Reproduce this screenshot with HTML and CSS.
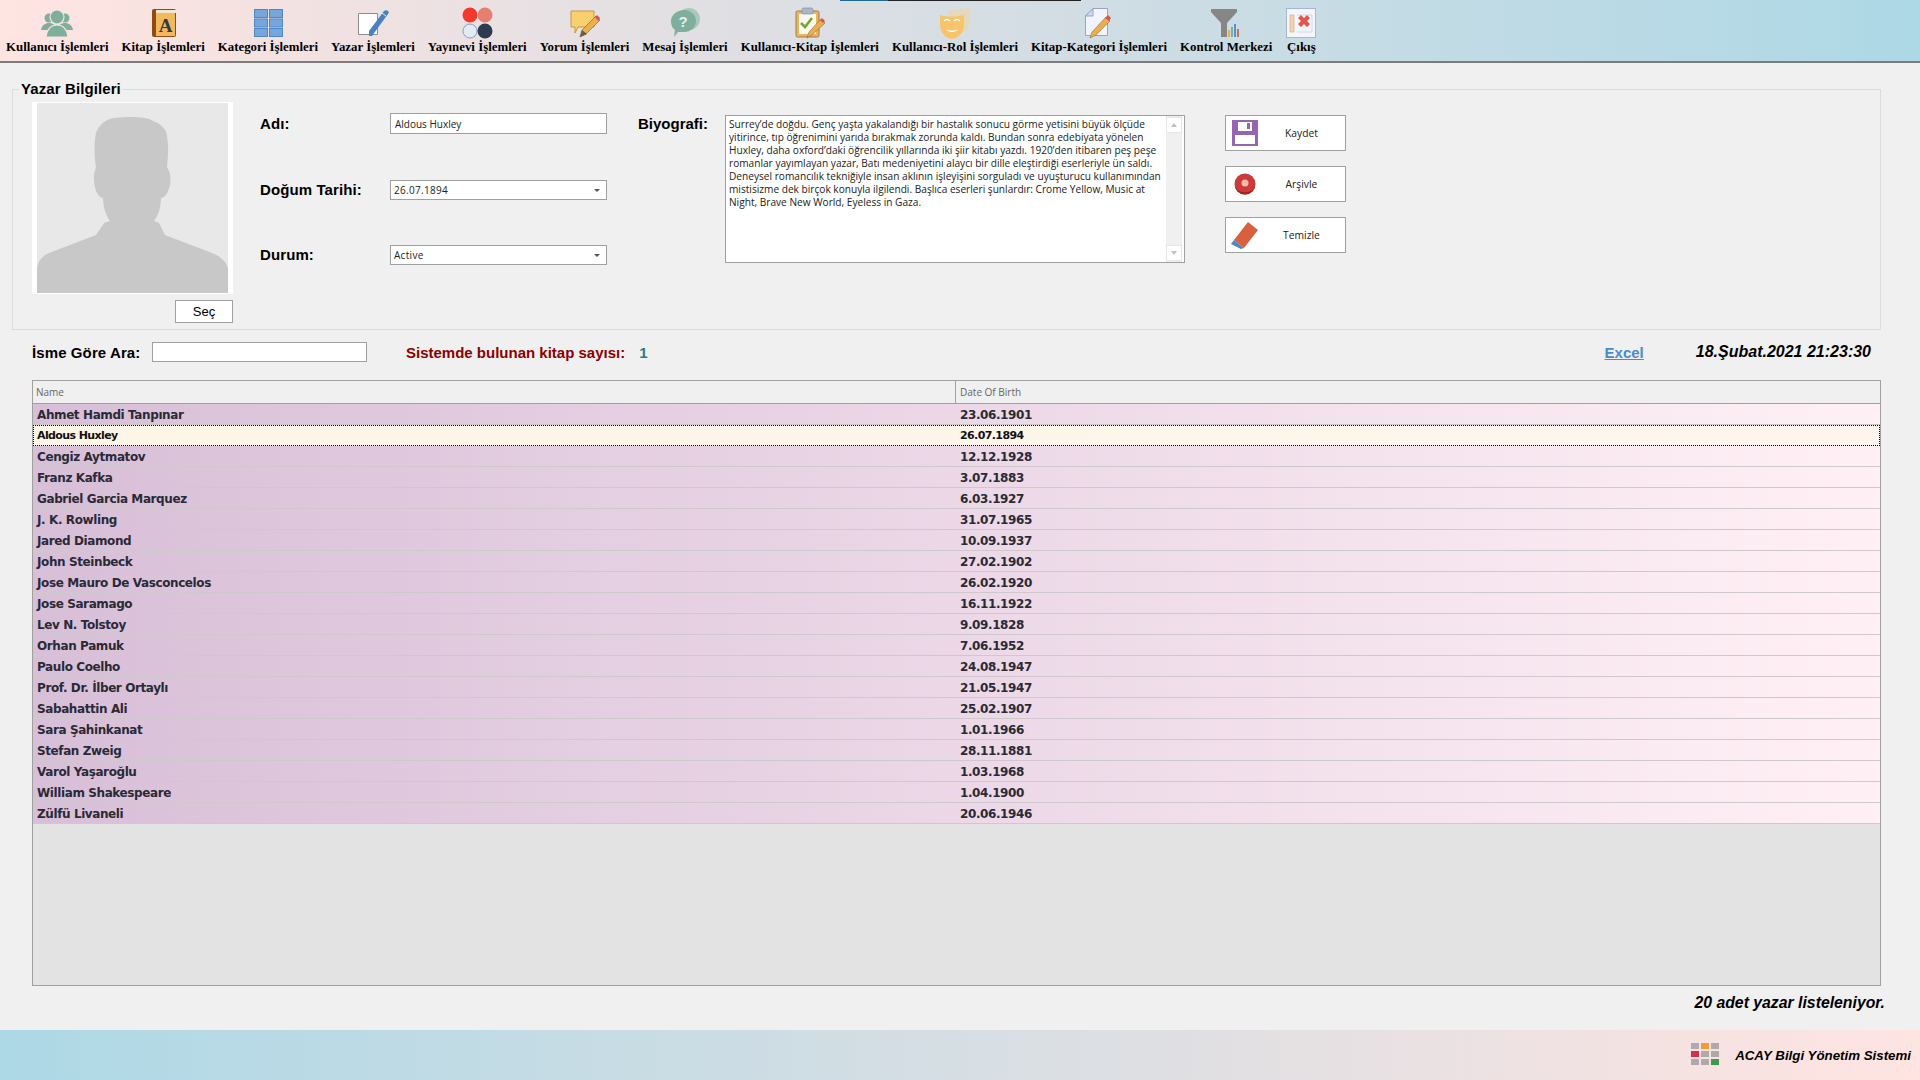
FILE: index.html
```html
<!DOCTYPE html>
<html lang="tr">
<head>
    <meta charset="utf-8">
    <title>Yazar Bilgileri</title>
    <link rel="stylesheet" href="styles.css">
</head>
<body>
    <div class="taskbar-sliver"><span class="sliver-blue"></span><span class="sliver-dark"></span></div>
    <nav class="toolbar">
        <a class="tool">
            <svg viewBox="0 0 32 32" class="tool-icon"><g fill="#7fae9c"><circle cx="8" cy="11" r="4.5"/><circle cx="24" cy="11" r="4.5"/><path d="M0 23c1-5 4-7 8-7s7 2 8 7z"/><path d="M16 23c1-5 4-7 8-7s7 2 8 7z"/></g><circle cx="16" cy="10" r="7" fill="#7fae9c" stroke="#f7e3e2" stroke-width="1.2"/><path d="M5 30c1-8 5-12 11-12s10 4 11 12z" fill="#7fae9c" stroke="#f7e3e2" stroke-width="1.2"/></svg>
            <span>Kullanıcı İşlemleri</span>
        </a>
        <a class="tool">
            <svg viewBox="0 0 32 32" class="tool-icon"><rect x="5" y="2" width="24" height="28" rx="2" fill="#8f4a17"/><rect x="9" y="3" width="20" height="3" fill="#f4e6cc"/><rect x="9" y="6" width="19" height="23" fill="#f3b75c"/><text x="18.5" y="25" class="icon-letter">A</text></svg>
            <span>Kitap İşlemleri</span>
        </a>
        <a class="tool">
            <svg viewBox="0 0 32 32" class="tool-icon"><g fill="#76a6dc" stroke="#4d86c4"><rect x="2.5" y="2.500" width="13" height="8"/><rect x="17.500" y="2.500" width="13" height="8"/><rect x="2.5" y="12" width="13" height="8"/><rect x="17.500" y="12" width="13" height="8"/><rect x="2.5" y="21.500" width="13" height="8"/><rect x="17.500" y="21.500" width="13" height="8"/></g></svg>
            <span>Kategori İşlemleri</span>
        </a>
        <a class="tool">
            <svg viewBox="0 0 32 32" class="tool-icon"><path d="M1.500 6.500h19v21h-19z" fill="#fff" stroke="#8d8d8d"/><path d="M12 24l15-20c1-1 3-1 4 0 1 1 1 2 0 3L15 29h-3z" fill="#4a82c0"/><path d="M25 6l4 3" stroke="#dfe8f2"/></svg>
            <span>Yazar İşlemleri</span>
        </a>
        <a class="tool">
            <svg viewBox="0 0 32 32" class="tool-icon"><circle cx="9" cy="8" r="7.500" fill="#f2392c"/><circle cx="24" cy="8" r="7.500" fill="#e38070"/><circle cx="9" cy="24" r="7" fill="#e3e9f5" stroke="#8a9cc0"/><circle cx="24" cy="24" r="7.500" fill="#2e3a50"/></svg>
            <span>Yayınevi İşlemleri</span>
        </a>
        <a class="tool">
            <svg viewBox="0 0 32 32" class="tool-icon"><path d="M2 4h23v16H9l-3 6v-6H2z" fill="#f8d06f" stroke="#c59a3e"/><path d="M11 30l2-7 14-14 4 4-14 14z" fill="#eab050" stroke="#8a6a3a" stroke-width=".7"/><path d="M26 10l2-2 3 3-2 3z" fill="#d9534f"/><path d="M11 30l2-7 5 4z" fill="#6b5a48"/></svg>
            <span>Yorum İşlemleri</span>
        </a>
        <a class="tool">
            <svg viewBox="0 0 32 32" class="tool-icon"><circle cx="20" cy="12" r="11" fill="#a9c9bb"/><path d="M15 3c7 0 12 5 12 11S22 25 15 25h-6l-4 5 1-7c-3-2-4-5-4-9C2 8 8 3 15 3z" fill="#7fae9c"/><text x="14" y="20" class="icon-mark">?</text></svg>
            <span>Mesaj İşlemleri</span>
        </a>
        <a class="tool">
            <svg viewBox="0 0 32 32" class="tool-icon"><rect x="2" y="4" width="23" height="26" rx="1.500" fill="#e8b566" stroke="#a87a3a"/><rect x="5" y="7" width="17" height="20" fill="#fbf7ec"/><rect x="8" y="1" width="11" height="6" rx="1.500" fill="#aab7c8" stroke="#78889e" stroke-width=".6"/><path d="M7 16l4 4 7-9" fill="none" stroke="#6cab33" stroke-width="2.500"/><path d="M13 31l2-6 12-13 4 4-13 12z" fill="#eab050" stroke="#8a6a3a" stroke-width=".6"/><path d="M26 13l2-2 3 3-2 2z" fill="#d9534f"/></svg>
            <span>Kullanıcı-Kitap İşlemleri</span>
        </a>
        <a class="tool">
            <svg viewBox="0 0 32 32" class="tool-icon"><path d="M8 4l23-3v12c0 6-3 11-8 14z" fill="#e6d8bc"/><path d="M1 8c7 2 15 2 24 0v10c0 7-5 13-12 14C6 31 1 25 1 18z" fill="#f5c46b"/><path d="M5 14c2-2 4-2 6 0M15 14c2-2 4-2 6 0" stroke="#fff" fill="none" stroke-width="1.500"/><path d="M7 22c3 2 9 2 12 0-2 4-10 4-12 0z" fill="#fff"/></svg>
            <span>Kullanıcı-Rol İşlemleri</span>
        </a>
        <a class="tool">
            <svg viewBox="0 0 32 32" class="tool-icon"><path d="M10 1.500h14.500v27h-22V9z" fill="#f1f4fb" stroke="#93a5c8"/><path d="M10 1.500V9H2.500z" fill="#cfd8ea" stroke="#93a5c8"/><path d="M7 31l2-6 14-15 4 4-14 14z" fill="#eab050" stroke="#8a6a3a" stroke-width=".6"/><path d="M22 11l3-3 3 3-2 3z" fill="#d9534f"/></svg>
            <span>Kitap-Kategori İşlemleri</span>
        </a>
        <a class="tool">
            <svg viewBox="0 0 32 32" class="tool-icon"><path d="M1 2h26v3l-10 11v14h-6V16L1 5z" fill="#868686"/><rect x="18" y="23" width="2" height="7" fill="#e8b04a"/><rect x="21" y="20" width="2" height="10" fill="#7fae9c"/><rect x="24" y="17" width="2" height="13" fill="#5a8fc8"/><rect x="27" y="22" width="2" height="8" fill="#d86a4e"/></svg>
            <span>Kontrol Merkezi</span>
        </a>
        <a class="tool">
            <svg viewBox="0 0 32 32" class="tool-icon"><rect x="1.500" y="1.500" width="29" height="29" fill="#f4f6fb" stroke="#a8b4d8"/><rect x="5" y="8" width="4" height="17" fill="#f1d4b4" stroke="#c8a888" stroke-width=".6"/><path d="M12 8h15v17H12" fill="none" stroke="#cfd8ea"/><path d="M13 11l3-3 3 3 3-3 3 3-3 3 3 3-3 3-3-3-3 3-3-3 3-3z" fill="#e2574c"/></svg>
            <span>Çıkış</span>
        </a>
    </nav>

    <main class="content">
        <fieldset class="group">
            <legend>Yazar Bilgileri</legend>
            <div class="group-body">
                <div class="photo-col">
                    <div class="photo">
                        <svg viewBox="0 0 191 190" class="photo-img">
                            <rect width="191" height="190" fill="#e8e8e8"/>
                            <path d="M94 14C104 14 112 15 116 18C124 21 130 26 130 34C132 42 131 55 130 64C134 70 135 80 131 88C129 93 126 95 124 95C124 102 122 112 117 118L122 120L128 132L175 150C185 154 191 160 191 168V190H0V166C1 158 5 153 12 150L59 132L67 120L73 118C69 112 66 104 66 95C62 94 59 90 58 84C56 76 57 70 59 64C57 54 57 40 59 30C62 21 70 16 77 15C83 14 88 14 94 14Z" fill="#c8c8c8"/>
                        </svg>
                    </div>
                    <button class="btn-small">Seç</button>
                </div>
                <div class="form-grid">
                    <label class="label">Adı:</label>
                    <input class="field field-text" value="Aldous Huxley">
                    <label class="label">Doğum Tarihi:</label>
                    <div class="field combo">26.07.1894</div>
                    <label class="label">Durum:</label>
                    <div class="field combo">Active</div>
                </div>
                <label class="label bio-label">Biyografi:</label>
                <div class="bio">
                    <div class="bio-text">Surrey’de doğdu. Genç yaşta yakalandığı bir hastalık sonucu görme yetisini büyük ölçüde<br>yitirince, tıp öğrenimini yarıda bırakmak zorunda kaldı. Bundan sonra edebiyata yönelen<br>Huxley, daha oxford’daki öğrencilik yıllarında iki şiir kitabı yazdı. 1920’den itibaren peş peşe<br>romanlar yayımlayan yazar, Batı medeniyetini alaycı bir dille eleştirdiği eserleriyle ün saldı.<br>Deneysel romancılık tekniğiyle insan aklının işleyişini sorguladı ve uyuşturucu kullanımından<br>mistisizme dek birçok konuyla ilgilendi. Başlıca eserleri şunlardır: Crome Yellow, Music at<br>Night, Brave New World, Eyeless in Gaza.</div>
                    <div class="scrollbar">
                        <span class="scroll-btn"><i class="arrow-up"></i></span>
                        <span class="scroll-btn"><i class="arrow-down"></i></span>
                    </div>
                </div>
                <div class="actions">
                    <button class="btn-action">
                        <svg viewBox="0 0 28 28" class="btn-icon"><path d="M1 1h26v26H1z" fill="#9565b0"/><rect x="7" y="3" width="14" height="9" fill="#fff"/><rect x="16" y="4" width="3" height="6" fill="#9565b0"/><rect x="4" y="16" width="20" height="9" fill="#fff"/></svg>
                        <span>Kaydet</span>
                    </button>
                    <button class="btn-action">
                        <svg viewBox="0 0 28 28" class="btn-icon"><circle cx="14" cy="14" r="10.500" fill="#cc3a3a"/><path d="M3.500 14a10.500 10.500 0 0 0 21 0 10.500 8.500 0 0 1-21 0z" fill="#9e2020"/><circle cx="14" cy="13" r="3.500" fill="#f4b8b0"/></svg>
                        <span>Arşivle</span>
                    </button>
                    <button class="btn-action">
                        <svg viewBox="0 0 28 28" class="btn-icon"><path d="M17 1l10 8-14 18-10-8z" fill="#d9603f"/><path d="M0 23l3-4 10 8-3 1z" fill="#4f86c0"/></svg>
                        <span>Temizle</span>
                    </button>
                </div>
            </div>
        </fieldset>

        <div class="search-row">
            <label class="label search-label">İsme Göre Ara:</label>
            <input class="field search-input">
            <span class="count-label">Sistemde bulunan kitap sayısı:</span>
            <span class="count-value">1</span>
            <a class="excel">Excel</a>
            <span class="clock">18.Şubat.2021 21:23:30</span>
        </div>

        <div class="grid">
            <div class="grid-head"><div class="col-name">Name</div><div class="col-date">Date Of Birth</div></div>
            <div class="grid-row"><div class="col-name">Ahmet Hamdi Tanpınar</div><div class="col-date">23.06.1901</div></div>
            <div class="grid-row selected"><div class="col-name">Aldous Huxley</div><div class="col-date">26.07.1894</div></div>
            <div class="grid-row"><div class="col-name">Cengiz Aytmatov</div><div class="col-date">12.12.1928</div></div>
            <div class="grid-row"><div class="col-name">Franz Kafka</div><div class="col-date">3.07.1883</div></div>
            <div class="grid-row"><div class="col-name">Gabriel Garcia Marquez</div><div class="col-date">6.03.1927</div></div>
            <div class="grid-row"><div class="col-name">J. K. Rowling</div><div class="col-date">31.07.1965</div></div>
            <div class="grid-row"><div class="col-name">Jared Diamond</div><div class="col-date">10.09.1937</div></div>
            <div class="grid-row"><div class="col-name">John Steinbeck</div><div class="col-date">27.02.1902</div></div>
            <div class="grid-row"><div class="col-name">Jose Mauro De Vasconcelos</div><div class="col-date">26.02.1920</div></div>
            <div class="grid-row"><div class="col-name">Jose Saramago</div><div class="col-date">16.11.1922</div></div>
            <div class="grid-row"><div class="col-name">Lev N. Tolstoy</div><div class="col-date">9.09.1828</div></div>
            <div class="grid-row"><div class="col-name">Orhan Pamuk</div><div class="col-date">7.06.1952</div></div>
            <div class="grid-row"><div class="col-name">Paulo Coelho</div><div class="col-date">24.08.1947</div></div>
            <div class="grid-row"><div class="col-name">Prof. Dr. İlber Ortaylı</div><div class="col-date">21.05.1947</div></div>
            <div class="grid-row"><div class="col-name">Sabahattin Ali</div><div class="col-date">25.02.1907</div></div>
            <div class="grid-row"><div class="col-name">Sara Şahinkanat</div><div class="col-date">1.01.1966</div></div>
            <div class="grid-row"><div class="col-name">Stefan Zweig</div><div class="col-date">28.11.1881</div></div>
            <div class="grid-row"><div class="col-name">Varol Yaşaroğlu</div><div class="col-date">1.03.1968</div></div>
            <div class="grid-row"><div class="col-name">William Shakespeare</div><div class="col-date">1.04.1900</div></div>
            <div class="grid-row"><div class="col-name">Zülfü Livaneli</div><div class="col-date">20.06.1946</div></div>
        </div>

        <div class="status">20 adet yazar listeleniyor.</div>
    </main>

    <footer class="footer">
        <div class="logo">
            <i></i><i class="orange"></i><i></i>
            <i class="red"></i><i></i><i></i>
            <i></i><i></i><i class="green"></i>
        </div>
        <span class="brand">ACAY Bilgi Yönetim Sistemi</span>
    </footer>
</body>
</html>
```

FILE: styles.css
```css
* {
    box-sizing: border-box;
}
body {
    margin: 0;
    width: 1920px;
    height: 1080px;
    overflow: hidden;
    display: flex;
    flex-direction: column;
    background-color: #f0f0f0;
    font-family: "Liberation Sans", Arial, sans-serif;
    color: #000;
    position: relative;
}

/* toolbar */
.taskbar-sliver {
    position: absolute;
    top: 0;
    left: 840px;
    display: flex;
    height: 1px;
}
.sliver-blue {
    width: 48px;
    background-color: #1d6a94;
}
.sliver-dark {
    width: 193px;
    background-color: #222;
}
.toolbar {
    height: 63px;
    flex: none;
    display: flex;
    gap: 13px;
    padding: 7px 0 0 6px;
    background: linear-gradient(to right, #ffe4e1, #add8e6);
    border-bottom: 2px solid #7c7c7c;
}
.tool {
    display: flex;
    flex-direction: column;
    align-items: center;
    font-family: "Liberation Serif", "Times New Roman", serif;
    font-weight: bold;
    font-size: 12.87px;
    line-height: 15px;
    white-space: nowrap;
}
.tool-icon {
    width: 32px;
    height: 32px;
    margin-bottom: 1px;
}
.icon-letter {
    font-family: "Liberation Serif", serif;
    font-weight: bold;
    font-size: 19px;
    text-anchor: middle;
    fill: #2e3a50;
}
.icon-mark {
    font-family: "Liberation Sans", sans-serif;
    font-weight: bold;
    font-size: 15px;
    text-anchor: middle;
    fill: #e8f0ec;
}

/* main area */
.content {
    flex: 1;
    display: flex;
    flex-direction: column;
    padding: 18px 39px 0 12px;
}
.group {
    height: 249px;
    margin: 0;
    padding: 5px 0 0 0;
    border: 1px solid #dcdcdc;
}
.group legend {
    margin-left: 6px;
    padding: 0 2px;
    font-size: 15px;
    letter-spacing: 0.1px;
    font-weight: bold;
    line-height: 16px;
}
.group-body {
    display: flex;
    align-items: flex-start;
    padding-left: 19px;
}
.photo-col {
    width: 201px;
    display: flex;
    flex-direction: column;
    align-items: flex-end;
}
.photo {
    width: 201px;
    height: 192px;
    padding: 1px 5px;
    background-color: #fff;
}
.photo-img {
    display: block;
    width: 191px;
    height: 190px;
}
.btn-small {
    width: 58px;
    height: 23px;
    margin-top: 6px;
    padding: 0;
    background-color: #fff;
    border: 1px solid #a0a0a0;
    font-family: inherit;
    font-size: 13px;
}
.form-grid {
    margin: 11px 0 0 27px;
    display: grid;
    grid-template-columns: 130px 217px;
    row-gap: 45px;
    align-items: center;
}
.form-grid .label {
    padding-bottom: 2px;
}
.form-grid .field-text {
    margin-bottom: 1px;
}
.label {
    font-size: 15px;
    letter-spacing: 0.1px;
    font-weight: bold;
    white-space: nowrap;
}
.field {
    height: 20px;
    background-color: #fff;
    border: 1px solid #a0a0a0;
    font-family: "Open Sans", sans-serif;
    font-size: 10px;
    color: #222;
    padding: 0 3px;
    line-height: 18px;
}
.field-text {
    height: 21px;
    padding: 0 4px;
    border-width: 1px;
    outline: none;
}
.combo {
    position: relative;
    letter-spacing: 0.3px;
}
.combo::after {
    content: "";
    position: absolute;
    right: 6px;
    top: 8px;
    border-left: 3px solid transparent;
    border-right: 3px solid transparent;
    border-top: 3px solid #555;
}
.bio-label {
    width: 87px;
    margin: 13px 0 0 31px;
    letter-spacing: 0;
}
.bio {
    width: 460px;
    height: 148px;
    margin-top: 13px;
    display: flex;
    background-color: #fff;
    border: 1px solid #a0a0a0;
}
.bio-text {
    flex: 1;
    padding: 2px 0 0 3px;
    font-family: "Open Sans", sans-serif;
    font-size: 10.15px;
    line-height: 13px;
    color: #222;
    white-space: nowrap;
    overflow: hidden;
}
.scrollbar {
    width: 16px;
    margin-right: 2px;
    display: flex;
    flex-direction: column;
    justify-content: space-between;
    padding: 1px 0;
    background-color: #f0f0f0;
}
.scroll-btn {
    height: 16px;
    display: flex;
    align-items: center;
    justify-content: center;
    background-color: #fff;
    border: 1px solid #e6e6e6;
}
.arrow-up {
    border-left: 3px solid transparent;
    border-right: 3px solid transparent;
    border-bottom: 4px solid #c0c0c0;
}
.arrow-down {
    border-left: 3px solid transparent;
    border-right: 3px solid transparent;
    border-top: 4px solid #c0c0c0;
}
.actions {
    margin: 13px 0 0 40px;
    display: flex;
    flex-direction: column;
    gap: 15px;
}
.btn-action {
    width: 121px;
    height: 36px;
    padding: 0 0 0 5px;
    display: flex;
    align-items: center;
    background-color: #fff;
    border: 1px solid #a0a0a0;
    font-family: "Open Sans", sans-serif;
    font-size: 10.3px;
    color: #222;
}
.btn-action span {
    flex: 1;
    text-align: center;
    padding-right: 1px;
}
.btn-icon {
    width: 28px;
    height: 28px;
    flex: none;
}

/* search row */
.search-row {
    height: 44px;
    margin: 0 0 6px 20px;
    display: flex;
    align-items: center;
    padding-right: 10px;
}
.search-label {
    width: 120px;
}
.search-input {
    width: 215px;
    height: 20px;
}
.count-label {
    margin-left: 39px;
    font-size: 15px;
    font-weight: bold;
    color: #8b0000;
}
.count-value {
    margin-left: 14px;
    font-size: 15px;
    font-weight: bold;
    color: #1f7f8f;
}
.excel {
    margin-left: auto;
    font-size: 15px;
    font-weight: bold;
    color: #4a8ad0;
    text-decoration: underline;
}
.clock {
    margin-left: 52px;
    font-size: 16px;
    font-weight: bold;
    font-style: italic;
}

/* authors list */
.grid {
    height: 606px;
    margin-left: 20px;
    background-color: #e3e3e3;
    border: 1px solid #a0a0a0;
}
.grid-head {
    height: 23px;
    display: flex;
    background-color: #f0f0f0;
    border-bottom: 1px solid #a0a0a0;
    font-family: "Open Sans", sans-serif;
    font-size: 10px;
    line-height: 22px;
    color: #666;
}
.grid-head .col-date {
    border-left: 1px solid #a0a0a0;
}
.col-name {
    width: 922px;
    padding-left: 3px;
}
.col-date {
    flex: 1;
    padding-left: 4px;
}
.grid-row {
    height: 21px;
    display: flex;
    background: linear-gradient(to right, #d8bfd8, #fff0f5);
    border-bottom: 1px solid #cfc8cd;
    font-family: "DejaVu Sans", Verdana, sans-serif;
    font-size: 12px;
    letter-spacing: -0.4px;
    font-weight: bold;
    line-height: 22px;
    color: #2a2a36;
}
.grid-row .col-name {
    padding-left: 4px;
}
.grid-row .col-date {
    padding-left: 5px;
}
.grid-row.selected {
    background: linear-gradient(to right, #fdf5e6, #fff5ee);
    outline: 1px dotted #000;
    outline-offset: -1px;
    border-bottom: none;
    font-size: 11px;
    letter-spacing: -0.6px;
    line-height: 21px;
    color: #111;
}

.status {
    margin: 6px -4px 0 0;
    text-align: right;
    font-size: 15.8px;
    font-weight: bold;
    font-style: italic;
    line-height: 22px;
}

/* footer */
.footer {
    height: 50px;
    flex: none;
    display: flex;
    align-items: center;
    justify-content: flex-end;
    gap: 16px;
    padding-right: 9px;
    background: linear-gradient(to right, #add8e6, #ffe4e1);
}
.logo {
    display: grid;
    grid-template-columns: repeat(3, 8px);
    grid-auto-rows: 6px;
    gap: 2px;
    margin-bottom: 2px;
}
.logo i {
    background-color: #b0a8aa;
}
.logo .orange {
    background-color: #f09a3e;
}
.logo .red {
    background-color: #d4304a;
}
.logo .green {
    background-color: #3a9a50;
}
.brand {
    font-size: 13.3px;
    font-weight: bold;
    font-style: italic;
}
```
